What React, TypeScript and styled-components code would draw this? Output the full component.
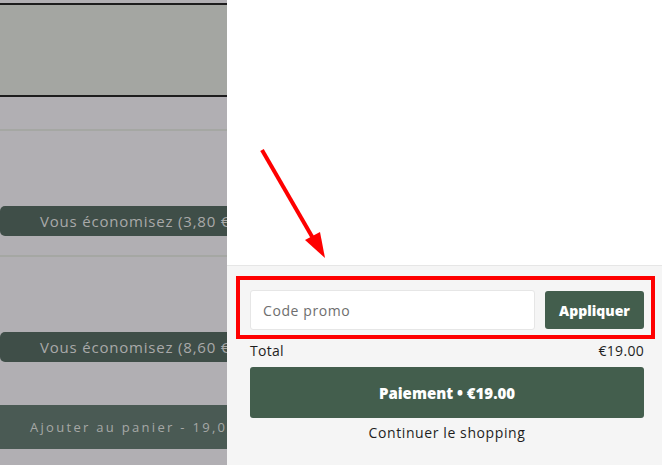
import React from "react";
import styled, { createGlobalStyle } from "styled-components";

const Global = createGlobalStyle`
  html, body { margin: 0; padding: 0; }
  body { font-family: "Open Sans", "Liberation Sans", sans-serif; }
  * { box-sizing: border-box; }
`;

const Page = styled.div`
  display: flex;
  width: 662px;
  height: 465px;
  overflow: hidden;
  position: relative;
`;

const Backdrop = styled.div`
  width: 227px;
  flex: none;
  background: #b1afb3;
  display: flex;
  flex-direction: column;
  overflow: hidden;
`;

const Spacer = styled.div<{ $h: number }>`
  height: ${(p) => p.$h}px;
  flex: none;
`;

const ImageBand = styled.div`
  height: 94px;
  flex: none;
  background: #a4a6a2;
  border-top: 2px solid #1d1d1d;
  border-bottom: 2px solid #1d1d1d;
`;

const Rule = styled.div`
  height: 2px;
  flex: none;
  background: #a5a7a3;
`;

const SaveBadge = styled.div`
  height: 30px;
  flex: none;
  width: 300px;
  background: #3f4e48;
  border-radius: 5px;
  display: flex;
  align-items: center;
  padding-left: 40px;
  white-space: nowrap;
  color: #a9a9a9;
  font-size: 15px;
  font-weight: 500;
  letter-spacing: 0.8px;
`;

const CartButton = styled.div`
  height: 44px;
  flex: none;
  width: 300px;
  background: #4a5a54;
  display: flex;
  align-items: center;
  padding-left: 30px;
  white-space: nowrap;
  color: #a6a8a6;
  font-size: 13px;
  font-weight: 500;
  letter-spacing: 2.3px;
`;

const Drawer = styled.div`
  flex: 1;
  display: flex;
  flex-direction: column;
  background: #ffffff;
`;

const DrawerBody = styled.div`
  flex: 1;
`;

const Footer = styled.div`
  height: 200px;
  flex: none;
  background: #f5f5f5;
  border-top: 1px solid #e6e6e6;
  padding: 24px 18px 0 23px;
  display: flex;
  flex-direction: column;
`;

const PromoRow = styled.div`
  display: flex;
  gap: 10px;
  height: 40px;
  position: relative;
  &::after {
    content: "";
    position: absolute;
    left: -14px;
    top: -14px;
    right: -11px;
    bottom: -9px;
    border: 4px solid #fe0000;
    pointer-events: none;
  }
`;

const PromoInput = styled.input`
  flex: 1;
  min-width: 0;
  height: 40px;
  border: 1px solid #e6e6e6;
  border-radius: 3px;
  background: #ffffff;
  padding: 0 12px;
  font-family: inherit;
  font-size: 14px;
  letter-spacing: 0.6px;
  color: #333;
  outline: none;
  &::placeholder { color: #6e6e6e; }
`;

const ApplyButton = styled.button`
  width: 99px;
  height: 38px;
  margin-top: 1px;
  border: none;
  border-radius: 3px;
  background: #435e4d;
  color: #ffffff;
  font-family: inherit;
  font-size: 14px;
  font-weight: 800;
  padding: 0;
`;

const TotalRow = styled.div`
  display: flex;
  justify-content: space-between;
  margin-top: 12px;
  font-size: 14px;
  line-height: 18px;
  color: #1e1e1e;
  letter-spacing: 0.3px;
`;

const CheckoutButton = styled.button`
  margin-top: 7px;
  height: 51px;
  border: none;
  border-radius: 3px;
  background: #435e4d;
  color: #ffffff;
  font-family: inherit;
  font-size: 15px;
  font-weight: 800;
  width: 100%;
`;

const ContinueLink = styled.div`
  margin-top: 5px;
  text-align: center;
  font-size: 14px;
  color: #1e1e1e;
  letter-spacing: 0.6px;
`;

const Arrow = styled.svg`
  position: absolute;
  left: 255px;
  top: 145px;
  pointer-events: none;
`;

export default function App() {
  return (
    <>
      <Global />
      <Page>
        <Backdrop>
          <Spacer $h={3} />
          <ImageBand />
          <Spacer $h={32} />
          <Rule />
          <Spacer $h={75} />
          <SaveBadge>Vous économisez (3,80 €)</SaveBadge>
          <Spacer $h={19} />
          <Rule />
          <Spacer $h={75} />
          <SaveBadge>Vous économisez (8,60 €)</SaveBadge>
          <Spacer $h={43} />
          <CartButton>Ajouter au panier - 19,00 €</CartButton>
        </Backdrop>
        <Drawer>
          <DrawerBody />
          <Footer>
            <PromoRow>
              <PromoInput placeholder="Code promo" />
              <ApplyButton>Appliquer</ApplyButton>
            </PromoRow>
            <TotalRow>
              <span>Total</span>
              <span>€19.00</span>
            </TotalRow>
            <CheckoutButton>Paiement • €19.00</CheckoutButton>
            <ContinueLink>Continuer le shopping</ContinueLink>
          </Footer>
        </Drawer>
        <Arrow width="80" height="120" viewBox="0 0 80 120">
          <line x1="7" y1="5" x2="59" y2="95" stroke="#fe0000" strokeWidth="4" />
          <polygon points="50,95 65,87 70,113" fill="#fe0000" />
        </Arrow>
      </Page>
    </>
  );
}
